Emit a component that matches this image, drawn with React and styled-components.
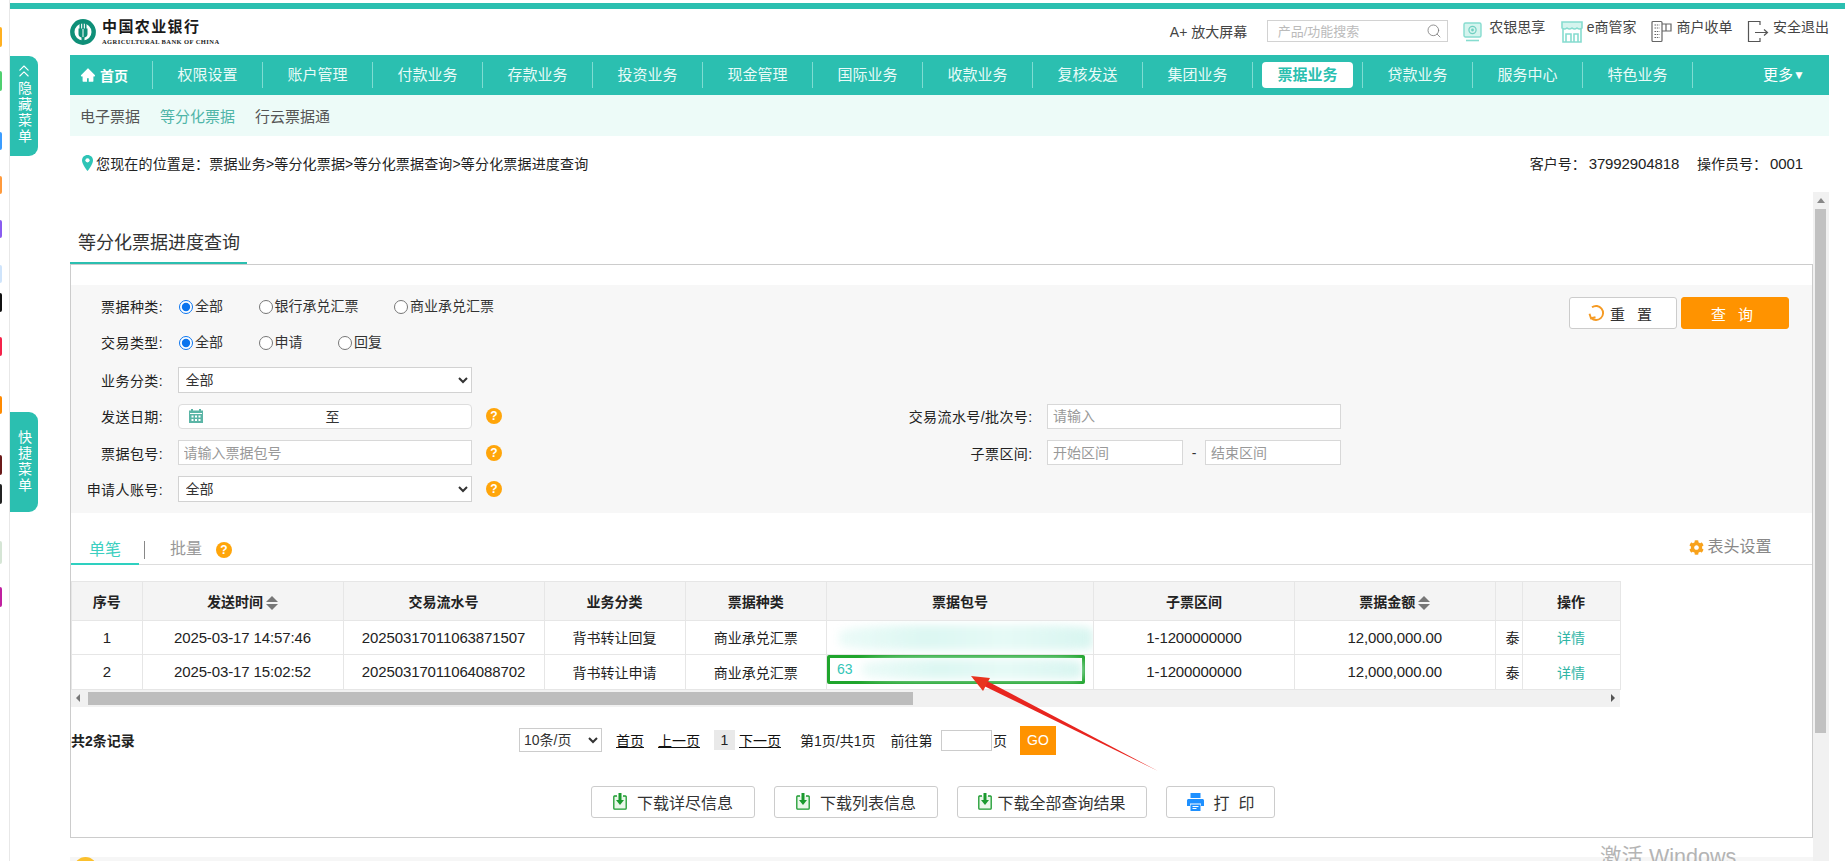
import React from 'react';
import styled, { createGlobalStyle } from 'styled-components';
import { ChevronsUp, Search } from 'lucide-react';
import { AiFillHome } from 'react-icons/ai';
import { FaCog } from 'react-icons/fa';

const TEAL = '#2bbfb0';

const GlobalStyle = createGlobalStyle`
    html, body {
        margin: 0;
        height: 861px;
        overflow: hidden;
        background: #fff;
    }
    body, input, select {
        font-family: "Liberation Sans", "Noto Sans CJK SC", sans-serif;
        font-size: 14px;
        color: #333;
    }
    * { box-sizing: border-box; }
`;

const Page = styled.div`
    position: relative;
    display: flex;
    width: 1845px;
    height: 861px;
    overflow: hidden;
`;

const Dock = styled.div`
    flex: 0 0 10px;
    display: flex;
    flex-direction: column;
    border-right: 1px solid #e8e8e8;
`;

const DockDot = styled.span`
    flex: none;
    width: 2px;
    height: ${p => p.$h}px;
    margin-top: ${p => p.$gap}px;
    background: ${p => p.$color};
    border-radius: 0 3px 3px 0;
`;

const SideTab = styled.div`
    position: absolute;
    left: 10px;
    top: ${p => p.$top}px;
    width: 28px;
    height: ${p => p.$h}px;
    padding-top: ${p => p.$pad}px;
    display: flex;
    flex-direction: column;
    align-items: center;
    background: ${TEAL};
    border-radius: 0 9px 9px 0;
    color: #fff;
    font-size: 14px;
    line-height: 16px;
    span {
        writing-mode: vertical-rl;
        text-orientation: upright;
        letter-spacing: 2px;
    }
`;

const Main = styled.div`
    flex: 1;
    min-width: 0;
    display: flex;
    flex-direction: column;
    padding-top: 3px;
`;

const TopStrip = styled.div`
    flex: 0 0 6px;
    background: ${TEAL};
`;

const Wrap = styled.div`
    flex: 1;
    display: flex;
    flex-direction: column;
    padding: 0 16px 0 60px;
    min-height: 0;
`;

const Header = styled.div`
    flex: 0 0 46px;
    display: flex;
    align-items: center;
    justify-content: space-between;
`;

const Logo = styled.div`
    display: flex;
    align-items: center;
    gap: 6px;
`;

const LogoText = styled.div`
    display: flex;
    flex-direction: column;
    b {
        font-size: 15px;
        line-height: 16px;
        letter-spacing: 1.4px;
        color: #1a1a1a;
        font-weight: 700;
    }
    small {
        margin-top: 3px;
        font-family: "Liberation Serif", serif;
        font-size: 6.5px;
        line-height: 7px;
        letter-spacing: .42px;
        font-weight: 700;
        color: #222;
        white-space: nowrap;
    }
`;

const Tools = styled.div`
    display: flex;
    align-items: center;
    margin-top: -3px;
`;

const Zoomer = styled.span`
    margin-right: 19.5px;
    color: #444;
    white-space: nowrap;
`;

const SearchBox = styled.div`
    width: 181px;
    height: 22px;
    padding: 0 5px 0 10px;
    display: flex;
    align-items: center;
    justify-content: space-between;
    border: 1px solid #d2d2d2;
    color: #bbb;
    font-size: 13px;
    svg { color: #777; }
`;

const Tool = styled.div`
    display: flex;
    align-items: flex-start;
    gap: ${p => p.$gap}px;
    height: 22px;
    margin-left: ${p => p.$left}px;
    white-space: nowrap;
    color: #444;
    line-height: 14px;
`;

const Nav = styled.div`
    flex: 0 0 40px;
    display: flex;
    align-items: center;
    background: ${TEAL};
    color: #e9fbf8;
    font-size: 15px;
`;

const HomeItem = styled.div`
    flex: 0 0 83px;
    height: 28px;
    display: flex;
    align-items: center;
    padding-left: 10px;
    gap: 4px;
    font-weight: 700;
    color: #fff;
    font-size: 14px;
    border-right: 1px solid #7fdcd2;
`;

const NavItem = styled.div`
    flex: 0 0 110px;
    height: 26px;
    display: flex;
    align-items: center;
    justify-content: center;
    border-right: 1px solid #7fdcd2;
    span {
        width: 91px;
        height: 26px;
        line-height: 26px;
        text-align: center;
        border-radius: 4px;
        background: ${p => (p.$active ? '#fff' : 'transparent')};
        color: ${p => (p.$active ? TEAL : 'inherit')};
        font-weight: ${p => (p.$active ? 700 : 400)};
    }
`;

const More = styled.div`
    margin-left: auto;
    margin-right: 24px;
    margin-bottom: 3px;
    color: #fff;
    white-space: nowrap;
    small { font-size: 12px; vertical-align: 1px; }
`;

const SubNav = styled.div`
    flex: 0 0 41px;
    display: flex;
    align-items: center;
    gap: 20px;
    padding-left: 10px;
    background: #edfbf8;
    font-size: 15px;
    color: #555;
`;

const SubLink = styled.span`
    color: ${p => (p.$active ? '#4fb5a8' : '#555')};
`;

const Crumbs = styled.div`
    flex: 0 0 56px;
    display: flex;
    align-items: center;
    justify-content: space-between;
    padding: 0 26px 2px 12px;
    color: #222;
`;

const CrumbPath = styled.div`
    display: flex;
    align-items: center;
    gap: 3px;
    letter-spacing: .16px;
`;

const Num = styled.span`
    font-size: 15px;
    letter-spacing: -.12px;
`;

const AccountNum = styled(Num)`
    margin-left: 3px;
`;

const Account = styled.div`
    display: flex;
    gap: 18px;
    white-space: nowrap;
`;

const Body = styled.div`
    flex: 1;
    display: flex;
    min-height: 0;
`;

const Content = styled.div`
    position: relative;
    flex: 0 0 1742.5px;
`;

const Title = styled.div`
    display: inline-block;
    vertical-align: top;
    width: 177px;
    height: 72px;
    padding: 36px 0 0 8px;
    font-size: 18px;
    line-height: 30px;
    color: #333;
    border-bottom: 2.5px solid ${TEAL};
`;

const Panel = styled.div`
    height: 574px;
    border: 1px solid #ccc;
`;

const Form = styled.div`
    margin-top: 20px;
    padding: 4px 0 5.6px;
    background: #f7f7f7;
`;

const Row = styled.div`
    height: 36.4px;
    padding-bottom: ${p => p.$lift || 0}px;
    display: grid;
    grid-template-columns: 92px 294px 16px 516px 294px 1fr;
    grid-template-rows: minmax(0, 1fr);
    column-gap: 14.5px;
    align-items: center;
`;

const Label = styled.label`
    text-align: right;
    color: #222;
    white-space: nowrap;
    letter-spacing: .4px;
`;

const RadioGroup = styled.div`
    display: flex;
    gap: 35.5px;
    margin-left: 1.5px;
    white-space: nowrap;
`;

const Radio = styled.label`
    display: inline-flex;
    align-items: flex-start;
    gap: 2px;
    line-height: 16px;
    input {
        width: 14px;
        height: 14px;
        margin: 2px 0 0;
        accent-color: #0a74ee;
    }
`;

const Actions = styled.div`
    grid-column: 6;
    justify-self: end;
    align-self: start;
    margin-top: 8px;
    margin-right: 22.5px;
    display: flex;
    gap: 4px;
`;

const FormButton = styled.button`
    width: 108px;
    height: 32px;
    padding-left: 4px;
    display: flex;
    align-items: center;
    justify-content: center;
    gap: 5px;
    border-radius: 3px;
    font: inherit;
    font-size: 15px;
    letter-spacing: 4px;
    border: 1px solid ${p => (p.$primary ? '#ff9300' : '#ccc')};
    background: ${p => (p.$primary ? '#ff9300' : '#fff')};
    color: ${p => (p.$primary ? '#fff' : '#333')};
`;

const FieldSelect = styled.select`
    width: 294px;
    height: 26px;
    padding-left: 3px;
    border: 1px solid #d2d2d2;
    background: #fff;
    color: #333;
    border-radius: 0;
`;

const DateField = styled.div`
    width: 294px;
    height: 25px;
    display: flex;
    align-items: center;
    padding-left: 10px;
    border: 1px solid #ddd;
    border-radius: 4px;
    background: #fff;
    span { margin-left: 123px; }
`;

const TextField = styled.input`
    width: ${p => p.$w || 294}px;
    height: 25px;
    padding: 0 5px;
    border: 1px solid #d8d8d8;
    background: #fff;
    outline: none;
    &::placeholder { color: #999; }
`;

const RangeField = styled.div`
    display: flex;
    align-items: center;
    justify-content: space-between;
    span { color: #333; }
`;

const Help = styled.span`
    display: inline-block;
    width: 16px;
    height: 16px;
    border-radius: 50%;
    background: #ffa50a;
    color: #fff;
    font-size: 12px;
    font-weight: 700;
    line-height: 16px;
    text-align: center;
`;

const TabHelp = styled(Help)`
    margin-bottom: 6px;
`;

const Tabs = styled.div`
    height: 52px;
    display: flex;
    align-items: flex-end;
    border-bottom: 1px solid #ddd;
`;

const Tab = styled.div`
    width: 68px;
    height: 28px;
    margin-bottom: -1px;
    text-align: center;
    font-size: 16px;
    line-height: 25px;
    color: #3ccfc0;
    border-bottom: 2.5px solid #2ed0c0;
`;

const TabBar = styled.i`
    width: 1px;
    height: 18px;
    margin: 0 25px 5px 5px;
    background: #888;
`;

const TabMuted = styled.div`
    height: 28px;
    margin-right: 14px;
    font-size: 16px;
    line-height: 25px;
    color: #999;
`;

const HeadSetting = styled.div`
    height: 28px;
    margin-left: auto;
    margin-right: 40px;
    display: flex;
    align-items: flex-start;
    gap: 3px;
    font-size: 16px;
    line-height: 22px;
    color: #888;
    svg { color: #f8a21c; margin-top: 4px; }
`;

const TableWrap = styled.div`
    width: 1549px;
    margin-top: 16px;
`;

const Table = styled.table`
    width: 1549px;
    table-layout: fixed;
    border-collapse: collapse;
`;

const Th = styled.th`
    height: 39px;
    padding: 0;
    background: #f4f4f4;
    border: 1px solid #e6e6e6;
    font-weight: 700;
    font-size: 14px;
    color: #222;
    white-space: nowrap;
`;

const Td = styled.td`
    height: 34px;
    padding: 0;
    border: 1px solid #e6e6e6;
    text-align: center;
    color: #222;
    white-space: nowrap;
    overflow: hidden;
`;

const CutTd = styled(Td)`
    text-align: left;
    padding-left: 10px;
`;

const Sort = styled.span`
    display: inline-flex;
    flex-direction: column;
    gap: 2px;
    margin-left: 3px;
    vertical-align: middle;
    &::before, &::after {
        content: '';
        border-left: 6px solid transparent;
        border-right: 6px solid transparent;
    }
    &::before { border-bottom: 6px solid #777; }
    &::after { border-top: 6px solid #777; }
`;

const Smear = styled.span`
    display: block;
    height: ${p => p.$h}px;
    width: ${p => p.$w}px;
    margin-left: ${p => p.$left}px;
    background: linear-gradient(90deg, #ecfbf8, #dcf7f2 35%, #e6faf6 65%, #d8f5f0);
    border-radius: 30% 20% 10% 25%;
    filter: blur(4px);
`;

const PickedPack = styled.div`
    width: 258px;
    height: 29px;
    margin-bottom: 5px;
    display: flex;
    align-items: center;
    padding-left: 7px;
    border: 3px solid #1fa52c;
    border-radius: 2px;
    color: #33c5b6;
    font-size: 14px;
`;

const Detail = styled.a`
    color: #2fb5a6;
`;

const HScroll = styled.div`
    height: 17px;
    display: flex;
    align-items: center;
    justify-content: space-between;
    padding: 0 5px;
    background: #f1f1f1;
    position: relative;
`;

const HThumb = styled.i`
    position: absolute;
    left: 17px;
    top: 2.5px;
    width: 825px;
    height: 13px;
    background: #bdbdbd;
`;

const Arrow = styled.i`
    width: 0;
    height: 0;
    border-top: 4px solid transparent;
    border-bottom: 4px solid transparent;
    ${p => (p.$dir === 'left' ? 'border-right: 4px solid #777;' : 'border-left: 4px solid #555;')}
`;

const Pager = styled.div`
    height: 29px;
    margin-top: 19px;
    display: flex;
    align-items: center;
    white-space: nowrap;
    color: #222;
`;

const Total = styled.b`
    width: 448px;
`;

const PageSize = styled.select`
    width: 83px;
    height: 24px;
    margin-right: 14px;
    border: 1px solid #ccc;
    background: #fff;
    color: #333;
`;

const PageLink = styled.a`
    margin-right: ${p => p.$gap}px;
    text-decoration: underline;
    color: #111;
`;

const PageNow = styled.span`
    width: 21px;
    height: 20px;
    margin-right: 4px;
    text-align: center;
    line-height: 20px;
    background: #e9e9e9;
`;

const PageText = styled.span`
    margin-right: ${p => p.$gap}px;
`;

const GoInput = styled.input`
    width: 51px;
    height: 21px;
    margin: 0 1px 0 8.5px;
    border: 1px solid #ccc;
`;

const GoButton = styled.div`
    width: 36px;
    height: 29px;
    margin-left: 13px;
    line-height: 29px;
    text-align: center;
    background: #ff9300;
    color: #fff;
`;

const Downloads = styled.div`
    margin-top: 31px;
    padding-left: 520px;
    display: flex;
    gap: 19px;
`;

const DownloadButton = styled.button`
    width: ${p => p.$w}px;
    height: 32px;
    display: flex;
    align-items: center;
    justify-content: center;
    gap: ${p => p.$gap}px;
    border: 1px solid #ccc;
    border-radius: 3px;
    background: #fff;
    font: inherit;
    font-size: 16px;
    color: #333;
`;

const BottomStrip = styled.div`
    height: 20px;
    margin-top: 19px;
    background: #f6f6f6;
    i {
        display: block;
        width: 23px;
        height: 23px;
        margin-left: 4px;
        border-radius: 50%;
        background: #fbc02d;
    }
`;

const VScroll = styled.div`
    flex: 0 0 16.5px;
    display: flex;
    flex-direction: column;
    align-items: center;
    background: #f1f1f1;
`;

const VArrow = styled.i`
    width: 0;
    height: 0;
    margin-top: 6px;
    border-left: 4px solid transparent;
    border-right: 4px solid transparent;
    border-bottom: 5px solid #888;
`;

const VThumb = styled.i`
    width: 11px;
    height: 524px;
    margin-top: 6px;
    background: #c1c1c1;
`;

const Annotation = styled.svg`
    position: absolute;
    left: -70px;
    top: -192px;
    width: 1845px;
    height: 861px;
    pointer-events: none;
`;

const Watermark = styled.div`
    position: absolute;
    left: 1600px;
    top: 843px;
    font-size: 21.5px;
    line-height: 28px;
    color: #b4b4b4;
    white-space: nowrap;
`;

const DOCK = [
    [27, 20, '#ffb020'], [71, 20, '#4fd070'], [132, 18, '#3b9cff'], [176, 18, '#ff9a3c'],
    [220, 18, '#8a5cf0'], [265, 18, '#cfe4fb'], [293, 19, '#111'], [337, 19, '#f5224a'],
    [396, 18, '#ff8a00'], [455, 20, '#6b1a1a'], [484, 20, '#222'], [541, 23, '#d5e5d5'],
    [587, 20, '#c020a0'],
];

const NAV = ['权限设置', '账户管理', '付款业务', '存款业务', '投资业务', '现金管理', '国际业务',
    '收款业务', '复核发送', '集团业务', '票据业务', '贷款业务', '服务中心', '特色业务'];

const COLS = [70.5, 201, 201, 141, 141.5, 267, 201, 200.5, 27, 98];

const ROWS = [
    { no: 1, time: '2025-03-17 14:57:46', serial: '20250317011063871507', kind: '背书转让回复' },
    { no: 2, time: '2025-03-17 15:02:52', serial: '20250317011064088702', kind: '背书转让申请' },
];

function BankLogo() {
    return (
        <svg width="26" height="26" viewBox="0 0 26 26">
            <circle cx="13" cy="13" r="10.7" fill="#fff" stroke="#0f8f78" strokeWidth="4.4" />
            <path d="M9.5 3h1.6v7H9.5zM12.2 2h1.6v8h-1.6zM14.9 3h1.6v7h-1.6z" fill="#0f8f78" />
            <path d="M8.5 9.5h9V15q0 3-3 3.4V24h-3v-5.6q-3-.4-3-3.4z" fill="#0f8f78" />
            <path d="M12.5 10v8h1v-8z" fill="#fff" />
        </svg>
    );
}

function PinIcon() {
    return (
        <svg width="11" height="16" viewBox="0 0 11 16">
            <path d="M5.5 0C2.4 0 0 2.4 0 5.4 0 9.2 5.5 16 5.5 16S11 9.2 11 5.4C11 2.4 8.6 0 5.5 0z" fill="#2ec4b6" />
            <circle cx="5.5" cy="5.3" r="2.1" fill="#fff" />
        </svg>
    );
}

function ShareIcon() {
    return (
        <svg width="19" height="23" viewBox="0 0 19 23">
            <rect x="1" y="3" width="17" height="14" rx="1.5" fill="#d4f4ee" stroke="#86dccf" strokeWidth="1.4" />
            <circle cx="9.5" cy="10" r="3.6" fill="none" stroke="#6fcfc1" strokeWidth="1.2" />
            <circle cx="9.5" cy="10" r="1.4" fill="#6fcfc1" />
            <path d="M3 20.5h13" stroke="#86dccf" strokeWidth="1.6" />
        </svg>
    );
}

function ShopIcon() {
    return (
        <svg width="22" height="23" viewBox="0 0 22 23" fill="none" stroke="#86dccf" strokeWidth="1.6">
            <path d="M1 2h20v6q-2.500 2-5 0-2.500 2-5 0-2.500 2-5 0-2.500 2-5 0z" fill="#d4f4ee" />
            <path d="M2 9v13h18V9M5 22v-8h5v8M13 22v-8h4v8" />
        </svg>
    );
}

function MerchantIcon() {
    return (
        <svg width="21" height="23" viewBox="0 0 21 23" fill="none" stroke="#666" strokeWidth="1.2">
            <rect x="1" y="1.500" width="10" height="20" rx="1" />
            <path d="M3.500 5h5M3.500 8h5M3.500 11.500h5M3.500 14.500h5M3.500 17.500h5" strokeDasharray="1.500 .8" />
            <path d="M11 4h9v7h-9M15 4v7" />
        </svg>
    );
}

function ExitIcon() {
    return (
        <svg width="22" height="23" viewBox="0 0 22 23" fill="none" stroke="#555" strokeWidth="1.2">
            <path d="M13 5V1.500H1.500v20H13V18" />
            <path d="M8 12.500h12.500M17 9.500l3.500 3-3.500 3" />
        </svg>
    );
}

function CalendarIcon() {
    return (
        <svg width="14" height="14" viewBox="0 0 14 14">
            <path d="M2 0h2v1.500h6V0h2v1.500h2V14H0V1.500h2z" fill="#5bb5a6" />
            <path d="M1 4.500h12" stroke="#fff" />
            <path d="M2.500 6.500h2v2h-2zM6 6.500h2v2H6zM9.500 6.500h2v2h-2zM2.500 10h2v2h-2zM6 10h2v2H6zM9.500 10h2v2h-2z" fill="#fff" />
        </svg>
    );
}

function ResetIcon() {
    return (
        <svg width="17" height="18" viewBox="0 0 17 18" fill="none" stroke="#f59a23" strokeWidth="1.900">
            <path d="M4 3.300A7 7 0 1 1 3.200 14" />
            <path d="M1.500 9.800L3 14.300l4.500-1" />
        </svg>
    );
}

function DownloadIcon() {
    return (
        <svg width="14" height="17" viewBox="0 0 14 17">
            <path d="M4 3H1.500A.8.8 0 0 0 .8 3.800v11.500c0 .5.3.9.8.9h10.800c.5 0 .8-.4.8-.9V3.800c0-.4-.3-.8-.8-.8H10" fill="#eaf7ea" stroke="#1a9a2e" strokeWidth="1.300" />
            <path d="M5.500 0h3v7h2.500L7 12 3 7h2.500z" fill="#1a9a2e" />
        </svg>
    );
}

function PrintIcon() {
    return (
        <svg width="17" height="18" viewBox="0 0 17 18">
            <path d="M3.500 0h10v5h-10z" fill="#1e90ff" />
            <path d="M1.500 6h14c.8 0 1.500.7 1.500 1.500V13h-3v-2.500H3V13H0V7.500C0 6.700.700 6 1.500 6z" fill="#1e90ff" />
            <path d="M3.500 11.500h10V18h-10z" fill="#1e90ff" />
            <path d="M5.500 13.500h6M5.500 15.500h4" stroke="#fff" strokeWidth="1" />
        </svg>
    );
}

export default function App() {
    let dockEnd = 0;

    return (
        <Page>
            <GlobalStyle />
            <Dock>
                {DOCK.map(([top, h, color]) => {
                    const gap = top - dockEnd;
                    dockEnd = top + h;
                    return <DockDot key={top} $h={h} $gap={gap} $color={color} />;
                })}
            </Dock>
            <SideTab $top={56} $h={100} $pad={5}>
                <ChevronsUp size={20} strokeWidth={1.3} />
                <span>隐藏菜单</span>
            </SideTab>
            <SideTab $top={412} $h={100} $pad={18}>
                <span>快捷菜单</span>
            </SideTab>

            <Main>
                <TopStrip />
                <Wrap>
                    <Header>
                        <Logo>
                            <BankLogo />
                            <LogoText>
                                <b>中国农业银行</b>
                                <small>AGRICULTURAL BANK OF CHINA</small>
                            </LogoText>
                        </Logo>
                        <Tools>
                            <Zoomer>A+ 放大屏幕</Zoomer>
                            <SearchBox>
                                产品/功能搜索
                                <Search size={16} strokeWidth={1.2} />
                            </SearchBox>
                            <Tool $left={15.5} $gap={7}><ShareIcon /><span>农银思享</span></Tool>
                            <Tool $left={15.5} $gap={4}><ShopIcon /><span>e商管家</span></Tool>
                            <Tool $left={14} $gap={5}><MerchantIcon /><span>商户收单</span></Tool>
                            <Tool $left={14} $gap={4.5}><ExitIcon /><span>安全退出</span></Tool>
                        </Tools>
                    </Header>

                    <Nav>
                        <HomeItem><AiFillHome size={16} />首页</HomeItem>
                        {NAV.map(item => (
                            <NavItem key={item} $active={item === '票据业务'}><span>{item}</span></NavItem>
                        ))}
                        <More>更多<small>▼</small></More>
                    </Nav>

                    <SubNav>
                        <SubLink>电子票据</SubLink>
                        <SubLink $active>等分化票据</SubLink>
                        <SubLink>行云票据通</SubLink>
                    </SubNav>

                    <Crumbs>
                        <CrumbPath>
                            <PinIcon />
                            您现在的位置是：票据业务&gt;等分化票据&gt;等分化票据查询&gt;等分化票据进度查询
                        </CrumbPath>
                        <Account>
                            <span>客户号：<AccountNum>37992904818</AccountNum></span>
                            <span>操作员号：<AccountNum>0001</AccountNum></span>
                        </Account>
                    </Crumbs>

                    <Body>
                        <Content>
                            <Title>等分化票据进度查询</Title>
                            <Panel>
                                <Form>
                                    <Row $lift={3}>
                                        <Label>票据种类:</Label>
                                        <RadioGroup>
                                            <Radio><input type="radio" name="billType" defaultChecked />全部</Radio>
                                            <Radio><input type="radio" name="billType" />银行承兑汇票</Radio>
                                            <Radio><input type="radio" name="billType" />商业承兑汇票</Radio>
                                        </RadioGroup>
                                        <Actions>
                                            <FormButton><ResetIcon />重 置</FormButton>
                                            <FormButton $primary>查 询</FormButton>
                                        </Actions>
                                    </Row>
                                    <Row $lift={3}>
                                        <Label>交易类型:</Label>
                                        <RadioGroup>
                                            <Radio><input type="radio" name="tradeType" defaultChecked />全部</Radio>
                                            <Radio><input type="radio" name="tradeType" />申请</Radio>
                                            <Radio><input type="radio" name="tradeType" />回复</Radio>
                                        </RadioGroup>
                                    </Row>
                                    <Row>
                                        <Label>业务分类:</Label>
                                        <FieldSelect><option>全部</option></FieldSelect>
                                    </Row>
                                    <Row>
                                        <Label>发送日期:</Label>
                                        <DateField><CalendarIcon /><span>至</span></DateField>
                                        <Help>?</Help>
                                        <Label>交易流水号/批次号:</Label>
                                        <TextField placeholder="请输入" />
                                    </Row>
                                    <Row>
                                        <Label>票据包号:</Label>
                                        <TextField placeholder="请输入票据包号" />
                                        <Help>?</Help>
                                        <Label>子票区间:</Label>
                                        <RangeField>
                                            <TextField $w={136} placeholder="开始区间" />
                                            <span>-</span>
                                            <TextField $w={136} placeholder="结束区间" />
                                        </RangeField>
                                    </Row>
                                    <Row>
                                        <Label>申请人账号:</Label>
                                        <FieldSelect><option>全部</option></FieldSelect>
                                        <Help>?</Help>
                                    </Row>
                                </Form>

                                <Tabs>
                                    <Tab>单笔</Tab>
                                    <TabBar />
                                    <TabMuted>批量</TabMuted>
                                    <TabHelp>?</TabHelp>
                                    <HeadSetting><FaCog size={15} />表头设置</HeadSetting>
                                </Tabs>

                                <TableWrap>
                                    <Table>
                                        <colgroup>
                                            {COLS.map((w, i) => <col key={i} width={w} />)}
                                        </colgroup>
                                        <thead>
                                            <tr>
                                                <Th>序号</Th>
                                                <Th>发送时间<Sort /></Th>
                                                <Th>交易流水号</Th>
                                                <Th>业务分类</Th>
                                                <Th>票据种类</Th>
                                                <Th>票据包号</Th>
                                                <Th>子票区间</Th>
                                                <Th>票据金额<Sort /></Th>
                                                <Th />
                                                <Th>操作</Th>
                                            </tr>
                                        </thead>
                                        <tbody>
                                            {ROWS.map(row => (
                                                <tr key={row.no}>
                                                    <Td><Num>{row.no}</Num></Td>
                                                    <Td><Num>{row.time}</Num></Td>
                                                    <Td><Num>{row.serial}</Num></Td>
                                                    <Td>{row.kind}</Td>
                                                    <Td>商业承兑汇票</Td>
                                                    {row.no === 1 ? (
                                                        <Td><Smear $w={254} $h={25} $left={12} /></Td>
                                                    ) : (
                                                        <Td>
                                                            <PickedPack>
                                                                63
                                                                <Smear $w={220} $h={20} $left={9} />
                                                            </PickedPack>
                                                        </Td>
                                                    )}
                                                    <Td><Num>1-1200000000</Num></Td>
                                                    <Td><Num>12,000,000.00</Num></Td>
                                                    <CutTd>泰</CutTd>
                                                    <Td><Detail>详情</Detail></Td>
                                                </tr>
                                            ))}
                                        </tbody>
                                    </Table>
                                    <HScroll>
                                        <Arrow $dir="left" />
                                        <HThumb />
                                        <Arrow $dir="right" />
                                    </HScroll>
                                </TableWrap>

                                <Pager>
                                    <Total>共2条记录</Total>
                                    <PageSize><option>10条/页</option></PageSize>
                                    <PageLink $gap={14}>首页</PageLink>
                                    <PageLink $gap={14}>上一页</PageLink>
                                    <PageNow>1</PageNow>
                                    <PageLink $gap={19}>下一页</PageLink>
                                    <PageText $gap={15}>第1页/共1页</PageText>
                                    <PageText $gap={0}>前往第</PageText>
                                    <GoInput />
                                    <PageText $gap={0}>页</PageText>
                                    <GoButton>GO</GoButton>
                                </Pager>

                                <Downloads>
                                    <DownloadButton $w={164} $gap={10}><DownloadIcon />下载详尽信息</DownloadButton>
                                    <DownloadButton $w={164} $gap={10}><DownloadIcon />下载列表信息</DownloadButton>
                                    <DownloadButton $w={190} $gap={5}><DownloadIcon />下载全部查询结果</DownloadButton>
                                    <DownloadButton $w={109} $gap={10}><PrintIcon />打&nbsp;&nbsp;印</DownloadButton>
                                </Downloads>
                            </Panel>
                            <BottomStrip><i /></BottomStrip>

                            <Annotation viewBox="0 0 1845 861">
                                <path d="M986 680.500L1158 771 983 685.500z" fill="#e8251f" />
                                <path d="M971 676l19 2-7 13z" fill="#e8341f" />
                            </Annotation>
                        </Content>
                        <VScroll>
                            <VArrow />
                            <VThumb />
                        </VScroll>
                    </Body>
                </Wrap>
            </Main>
            <Watermark>激活 Windows</Watermark>
        </Page>
    );
}
